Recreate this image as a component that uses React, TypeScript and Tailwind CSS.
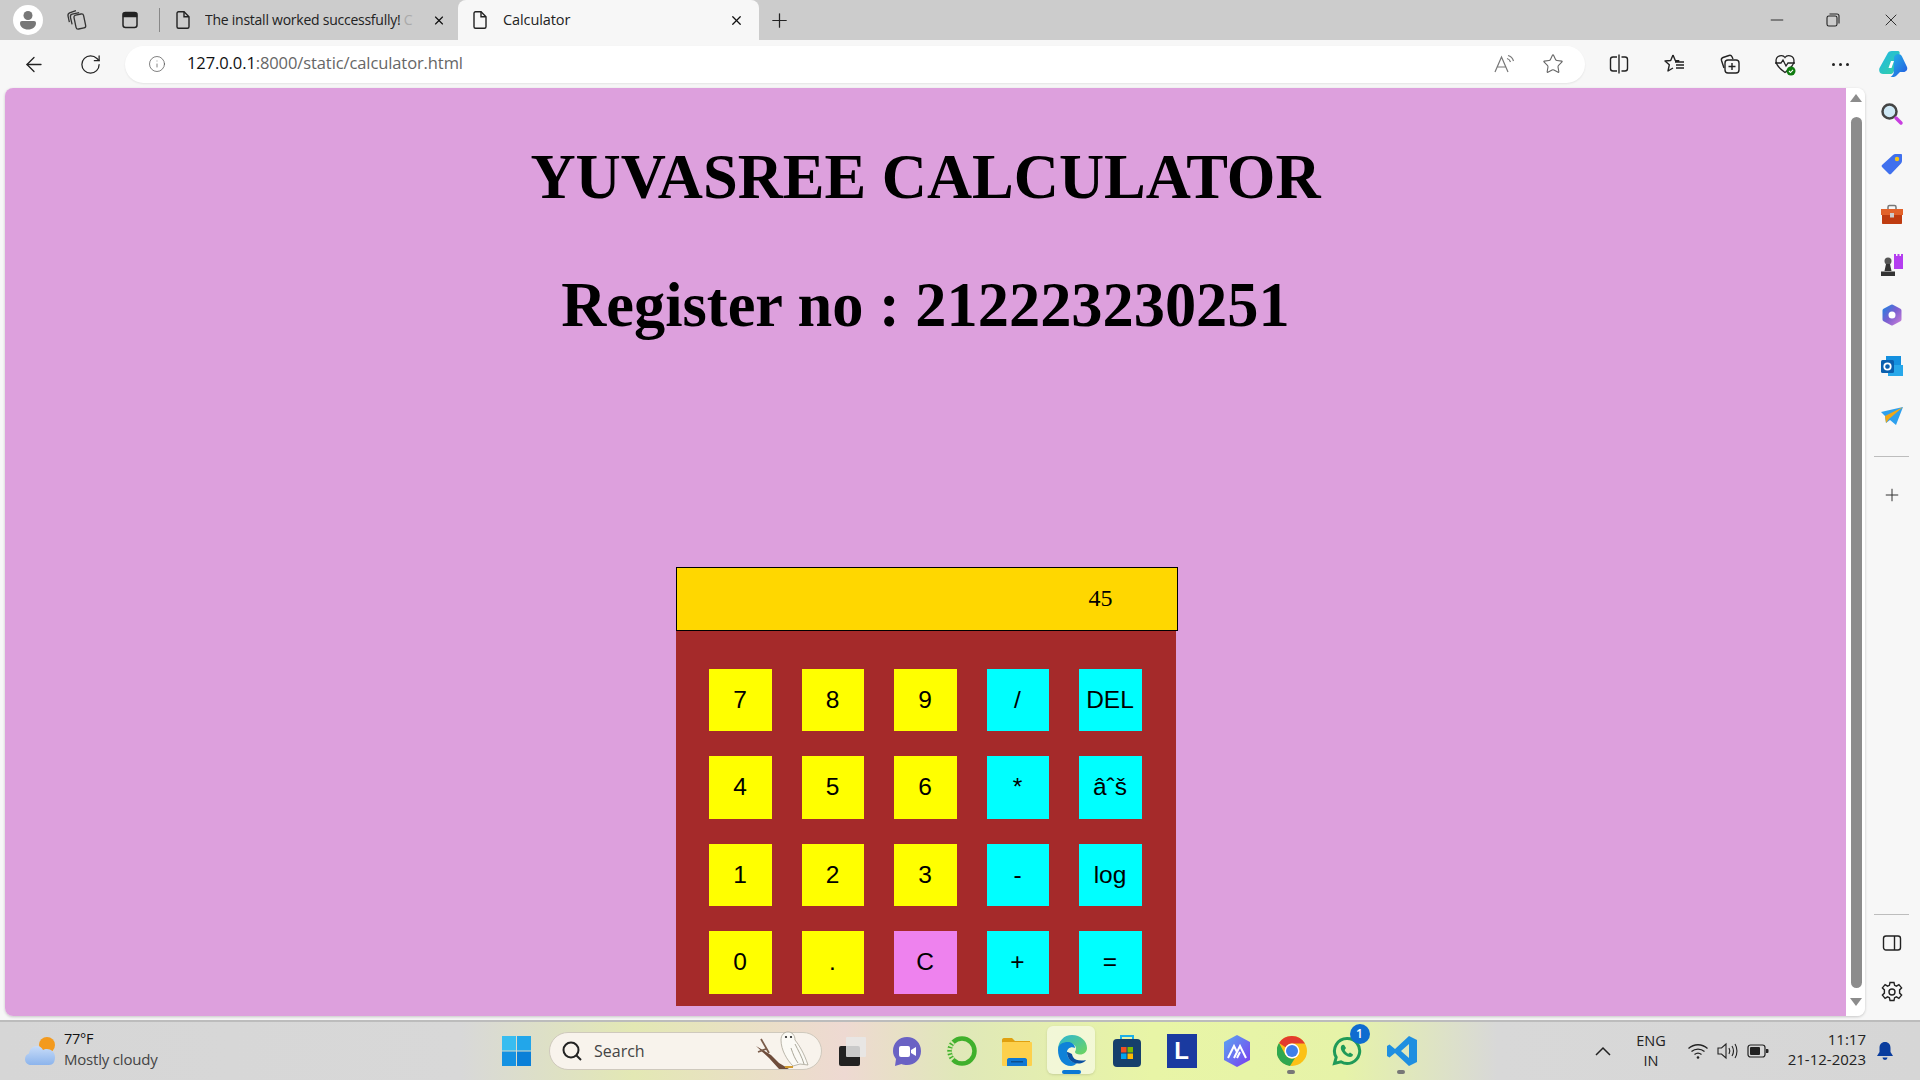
import { ArrowLeft, Info, Minus, Plus, RotateCw, Star, X } from "lucide-react";
import type { ReactNode } from "react";

const ui = "font-['Open_Sans',sans-serif]";

const keys = [
  ["7", "8", "9", "/", "DEL"],
  ["4", "5", "6", "*", "âˆš"],
  ["1", "2", "3", "-", "log"],
  ["0", ".", "C", "+", "="],
];

function keyColor(label: string, col: number) {
  if (label === "C") return "bg-[#ee82ee]";
  return col > 2 ? "bg-[#00ffff]" : "bg-[#ffff00]";
}

function Calculator() {
  return (
    <div className="mx-auto mt-[225px] w-[500px] bg-[#a52a2a] font-normal">
      <div className="h-[64px] w-[502px] border border-black bg-[#ffd700] pr-[64px] text-right font-['Liberation_Serif',serif] text-[24px] leading-[60px] text-black">
        45
      </div>
      <div className="grid grid-cols-[63px_62px_63px_62px_63px] grid-rows-[62px_63px_62px_63px] gap-x-[30px] gap-y-[25px] pb-[12px] pl-[33px] pt-[38px]">
        {keys.flat().map((label, i) => (
          <div key={i} className={`flex items-center justify-center font-['Liberation_Sans',sans-serif] text-[24.500px] text-black ${keyColor(label, i % 5)}`}>
            {label}
          </div>
        ))}
      </div>
    </div>
  );
}

function Doc() {
  return (
    <svg width="18" height="20" viewBox="0 0 18 20" fill="none" stroke="#222" strokeWidth="1.4" className="shrink-0">
      <path d="M3 3.2a1.5 1.5 0 0 1 1.5-1.5h5.5l5 5v10a1.5 1.5 0 0 1-1.5 1.5h-9A1.5 1.5 0 0 1 3 16.700z" />
      <path d="M10 1.700v5h5" />
    </svg>
  );
}

function Slot({ w = 24, className = "", children }: { w?: number; className?: string; children: ReactNode }) {
  return (
    <div style={{ width: w }} className={`flex shrink-0 items-center justify-center ${className}`}>
      {children}
    </div>
  );
}

function TabStrip() {
  return (
    <div className={`flex h-[40px] items-center bg-[#cccccc] pl-[13px] pr-[19px] ${ui}`}>
      <div className="flex h-[30px] w-[30px] shrink-0 items-center justify-center rounded-full bg-white">
        <svg width="20" height="22" viewBox="0 0 20 22" fill="#777">
          <circle cx="10" cy="6.500" r="4.500" />
          <path d="M2 14a2 2 0 0 1 2-2h12a2 2 0 0 1 2 2c0 4-3.500 6.500-8 6.500S2 18 2 14z" />
        </svg>
      </div>
      <Slot className="ml-[22px]">
        <svg width="24" height="24" viewBox="0 0 22 22" fill="none" stroke="#333" strokeWidth="1.200">
          <rect x="9" y="6" width="9" height="13" rx="2" transform="rotate(-12 13 12)" />
          <path d="M6.500 15 5 8.500c-.3-1.500.4-2.500 1.600-2.800L13 4.200M4 13 2.800 7.500C2.500 6 3 5 4.200 4.500L10 2.500" />
        </svg>
      </Slot>
      <Slot className="ml-[29px]">
        <svg width="20" height="20" viewBox="0 0 20 20" fill="none" stroke="#222" strokeWidth="1.500">
          <rect x="3" y="2.500" width="14" height="15" rx="2.500" />
          <path d="M3.500 3.500h13v3h-13z" fill="#222" />
        </svg>
      </Slot>
      <div className="ml-[17px] h-[24px] w-px shrink-0 bg-[#888]" />
      <Slot w={18} className="ml-[14px]">
        <Doc />
      </Slot>
      <div className="ml-[13px] w-[225px] shrink-0 overflow-hidden whitespace-nowrap text-[14px] leading-[20px] tracking-[-0.25px] text-[#222]">
        The install worked successfully! <span className="text-[#aaa]">C</span>
      </div>
      <Slot w={14} className="ml-[2px]">
        <X size={15} strokeWidth={2} color="#111" />
      </Slot>
      <div className="ml-[12px] flex h-[40px] w-[301px] shrink-0 items-center rounded-t-lg bg-[#f7f7f7] pl-[13px] pr-[15px]">
        <Slot w={18}>
          <Doc />
        </Slot>
        <div className="ml-[14px] flex-1 text-[14.500px] leading-[20px] tracking-[-0.1px] text-[#222]">Calculator</div>
        <X size={15} strokeWidth={2} color="#111" />
      </div>
      <Slot className="ml-[8px]">
        <Plus size={23} strokeWidth={1.300} color="#222" />
      </Slot>
      <div className="flex-1" />
      <Minus size={20} strokeWidth={1.100} color="#222" />
      <Slot w={20} className="ml-[36px]">
        <svg width="16" height="16" viewBox="0 0 16 16" fill="none" stroke="#222" strokeWidth="1.100">
          <rect x="2" y="4" width="10" height="10" rx="1.800" />
          <path d="M4.500 2h7.500A2 2 0 0 1 14 4v7.500" />
        </svg>
      </Slot>
      <Slot w={20} className="ml-[38px]">
        <X size={20} strokeWidth={1.100} color="#222" />
      </Slot>
    </div>
  );
}

function Toolbar() {
  return (
    <div className={`flex h-[48px] items-center bg-[#f7f7f7] pl-[22px] ${ui}`}>
      <Slot>
        <ArrowLeft size={25} strokeWidth={1.300} color="#222" />
      </Slot>
      <Slot className="ml-[32px]">
        <RotateCw size={23} strokeWidth={1.300} color="#222" />
      </Slot>
      <div className="ml-[23px] flex h-[37px] w-[1460px] shrink-0 items-center rounded-full bg-white pl-[23px] pr-[20px] shadow-[0_1px_2px_rgba(0,0,0,0.08)]">
        <Slot w={18}>
          <Info size={24} strokeWidth={0.900} color="#444" />
        </Slot>
        <div className="ml-[21px] mt-[-2px] flex-1 text-[16.500px] tracking-[-0.1px] text-[#666]">
          <span className="text-[#111]">127.0.0.1</span>:8000/static/calculator.html
        </div>
        <Slot>
          <svg width="24" height="24" viewBox="0 0 24 24" fill="none" stroke="#777" strokeWidth="1.200">
            <path d="M3 20 9.500 5 16 20M5.500 15h8" />
            <path d="M15 6.500c1.800.5 3 1.700 3.500 3.500M16 3.500c2.800.7 4.700 2.700 5.500 5.500" />
          </svg>
        </Slot>
        <Slot className="ml-[25px]">
          <Star size={22} strokeWidth={1.200} color="#666" />
        </Slot>
      </div>
      <Slot className="ml-[22px]">
        <svg width="22" height="22" viewBox="0 0 22 22" fill="none" stroke="#222" strokeWidth="1.400">
          <path d="M9 4H5a2.500 2.500 0 0 0-2.500 2.500v9A2.500 2.500 0 0 0 5 18h4M13.500 4H17a2.500 2.500 0 0 1 2.500 2.500v9A2.500 2.500 0 0 1 17 18h-3.500M11 1.500v19" />
        </svg>
      </Slot>
      <Slot className="ml-[32px]">
        <svg width="24" height="24" viewBox="0 0 24 24" fill="none" stroke="#222" strokeWidth="1.400" strokeLinejoin="round">
          <path d="M10 3 7.700 8.500 2 9l4.300 3.800L5 19l5-3" />
          <path d="M10 3l2.300 5.500 4 .3M13 13h8M13 16h8M12 10h9" />
        </svg>
      </Slot>
      <Slot className="ml-[31px]">
        <svg width="24" height="24" viewBox="0 0 24 24" fill="none" stroke="#222" strokeWidth="1.400">
          <path d="M6 16 3.500 8.500c-.4-1.400.2-2.500 1.500-3l6-2c1.300-.4 2.400 0 3 1.200L15 7" />
          <rect x="7" y="8" width="14" height="13" rx="3" />
          <path d="M14 11v7M10.500 14.500h7" />
        </svg>
      </Slot>
      <Slot className="ml-[31px]">
        <svg width="24" height="24" viewBox="0 0 24 24" fill="none">
          <path d="M12 5.500C10 2.500 3 3 3 9c0 4 4 8 9 11.500 2-1.400 4-3 5.500-4.700C20 13 21 11 21 9c0-6-7-6.500-9-3.500z" stroke="#222" strokeWidth="1.300" />
          <path d="M2 11h6l2-3 3 6 2-3h7" stroke="#222" strokeWidth="1.300" />
          <circle cx="18" cy="19" r="4.500" fill="#107c10" />
          <path d="m16 19 1.500 1.500 2.500-2.700" stroke="#fff" strokeWidth="1.100" />
        </svg>
      </Slot>
      <Slot className="ml-[31px]">
        <div className="flex gap-[4px]">
          <div className="h-[3px] w-[3px] rounded-full bg-[#222]" />
          <div className="h-[3px] w-[3px] rounded-full bg-[#222]" />
          <div className="h-[3px] w-[3px] rounded-full bg-[#222]" />
        </div>
      </Slot>
      <Slot w={30} className="ml-[26px]">
        <svg width="30" height="28" viewBox="0 0 30 28">
          <defs>
            <linearGradient id="cpa" x1="0" y1="0" x2="1" y2="1">
              <stop offset="0" stopColor="#1fb6e8" />
              <stop offset="1" stopColor="#36d3a0" />
            </linearGradient>
            <linearGradient id="cpb" x1="0" y1="0" x2="1" y2="1">
              <stop offset="0" stopColor="#22b8e8" />
              <stop offset="1" stopColor="#2457e0" />
            </linearGradient>
          </defs>
          <path d="M9 4.500C10 2 11.500 1 14 1h6c1.500 0 2 1.500 1.500 3L16 21c-.8 2.500-2.300 3-4 3H5c-3 0-4.500-3-3.500-6z" fill="url(#cpa)" />
          <path d="M16 7c.8-2 2-3 4-3 1.800 0 3 .7 4 2.500L29 17c1 2.500-.8 5-3.500 5H22l-4 4c-1 1-3 1-5.500 1 1.500-1 2.500-2.300 3.200-4z" fill="url(#cpb)" />
          <path d="M13 11h3l-2.500 7h-3z" fill="#fff" />
        </svg>
      </Slot>
    </div>
  );
}

function Scrollbar() {
  return (
    <div className="flex w-[19px] shrink-0 flex-col items-center bg-white pl-[1px]">
      <div className="mt-[6px] h-0 w-0 border-x-[6px] border-b-[8px] border-x-transparent border-b-[#8c8c8c]" />
      <div className="mt-[15px] h-[871px] w-[11px] rounded-full bg-[#8c8c8c]" />
      <div className="mt-[10px] h-0 w-0 border-x-[6px] border-t-[8px] border-x-transparent border-t-[#8c8c8c]" />
    </div>
  );
}

const sideIcons = [
  <svg key="s" width="24" height="24" viewBox="0 0 24 24" fill="none">
    <circle cx="9.500" cy="9.500" r="7" fill="#cfe8f5" stroke="#444" strokeWidth="2.500" />
    <path d="m16 16 5 5" stroke="#c83ee0" strokeWidth="3.500" strokeLinecap="round" />
  </svg>,
  <svg key="t" width="24" height="24" viewBox="0 0 24 24">
    <path d="M2 13 13 3c.8-.7 1.500-1 2.500-1H21c.7 0 1 .5 1 1v6c0 1-.3 1.800-1 2.500L11 22c-.7.5-1.500.5-2 0l-7-7c-.5-.6-.5-1.400 0-2z" fill="#4070ee" />
    <circle cx="17" cy="7" r="2.200" fill="#f5c518" />
  </svg>,
  <svg key="b" width="24" height="22" viewBox="0 0 24 22">
    <path d="M8 5V3c0-1 .6-1.500 1.500-1.500h5C15.400 1.500 16 2 16 3v2" fill="none" stroke="#777" strokeWidth="1.500" />
    <path d="M1 5h22v6H1z" fill="#e2622a" />
    <path d="M2 11h20v8c0 .6-.4 1-1 1H3c-.6 0-1-.4-1-1z" fill="#bf3c10" />
    <rect x="10" y="9" width="4" height="4.500" fill="#ccc" />
  </svg>,
  <svg key="c" width="24" height="24" viewBox="0 0 24 24">
    <path d="M14 1h2v2h1.500V1h2v2H21V1h2v15h-9z" fill="#b43df0" />
    <circle cx="8" cy="8" r="3.500" fill="#555" />
    <path d="M6 11h4l1.500 7h-7zM1 18.500h14V23H1z" fill="#333" />
  </svg>,
  <svg key="m" width="24" height="24" viewBox="0 0 24 24" fill="none">
    <defs>
      <linearGradient id="m365" x1="0" y1="0" x2="1" y2="1">
        <stop offset="0" stopColor="#2a7de0" />
        <stop offset="0.500" stopColor="#7c5fd0" />
        <stop offset="1" stopColor="#c07ad8" />
      </linearGradient>
    </defs>
    <path d="M12 3.500 19.500 7.500v9L12 20.500 4.500 16.500v-9z" fill="url(#m365)" stroke="url(#m365)" strokeWidth="4" strokeLinejoin="round" />
    <circle cx="12" cy="12" r="3.500" fill="#fff" />
  </svg>,
  <svg key="o" width="24" height="24" viewBox="0 0 24 24">
    <rect x="6" y="2" width="15" height="11" fill="#1490df" />
    <path d="M8 11h15v11H8z" fill="#28a8ea" />
    <rect x="1" y="6" width="13" height="13" rx="1.500" fill="#0a5fae" />
    <circle cx="7.500" cy="12.500" r="3.200" fill="none" stroke="#fff" strokeWidth="1.800" />
  </svg>,
  <svg key="p" width="24" height="20" viewBox="0 0 24 20">
    <path d="M1 6 23 1 16 19 10 14 6 17 5 10z" fill="#2ea0ee" />
    <path d="M5 10 23 1 9 13l-3 4z" fill="#f0a818" />
  </svg>,
];

function Sidebar() {
  return (
    <div className="flex w-[53px] shrink-0 flex-col items-center pt-[1px]">
      {sideIcons.map((icon, i) => (
        <div key={i} className="flex h-[50.300px] w-full items-center justify-center">
          {icon}
        </div>
      ))}
      <div className="mt-[15px] h-px w-[35px] bg-[#bdbdbd]" />
      <Plus size={20} strokeWidth={1.200} color="#333" className="mt-[28px]" />
      <div className="flex-1" />
      <div className="h-px w-[35px] bg-[#bdbdbd]" />
      <svg width="20" height="18" viewBox="0 0 20 18" fill="none" stroke="#222" strokeWidth="1.400" className="mt-[19px]">
        <rect x="1.500" y="2" width="17" height="14" rx="2.500" />
        <path d="M12.500 2v14" />
      </svg>
      <svg width="24" height="24" viewBox="0 0 24 24" fill="none" stroke="#222" strokeWidth="1.400" className="mb-[12px] mt-[28px]">
        <circle cx="12" cy="12" r="3" />
        <path d="M10 2.500h4l.6 2.800 1.800.8 2.500-1.500 2.700 3.300-2 2v3.200l2 2-2.700 3.300-2.500-1.500-1.800.8-.6 2.800h-4l-.6-2.800-1.800-.8-2.500 1.500-2.700-3.300 2-2v-3.200l-2-2 2.700-3.300 2.500 1.500 1.800-.8z" />
      </svg>
    </div>
  );
}

const taskIcons: { icon: ReactNode; active?: boolean; dot?: boolean }[] = [
  {
    icon: (
      <svg width="30" height="32" viewBox="0 0 30 32">
        <rect x="2" y="11" width="21" height="20" rx="2" fill="#222" />
        <rect x="9" y="2" width="20" height="20" rx="1" fill="#e8e8e8" fillOpacity="0.850" />
      </svg>
    ),
  },
  {
    icon: (
      <svg width="30" height="32" viewBox="0 0 30 32">
        <path d="M15 2c8 0 14 6 14 14s-6 14-14 14c-2 0-4-.4-5.500-1L3 31l1-7C2 21.500 1 19 1 16 1 8 7 2 15 2z" fill="#6a62c4" />
        <rect x="7" y="11" width="11" height="11" rx="2" fill="#fff" />
        <path d="m19 15 5-3v9l-5-3z" fill="#fff" />
      </svg>
    ),
  },
  {
    icon: (
      <svg width="32" height="32" viewBox="0 0 32 32" fill="none">
        <circle cx="16" cy="16" r="12.500" stroke="#40b02c" strokeWidth="4.500" />
        <path d="M7 7a12.500 12.500 0 0 0 0 18" stroke="#d8e8b0" strokeWidth="5" strokeDasharray="2 1.500" />
      </svg>
    ),
  },
  {
    icon: (
      <svg width="31" height="30" viewBox="0 0 31 30">
        <path d="M1 4c0-1 .6-2 2-2h8l3 3h15v6H1z" fill="#e0a010" />
        <rect x="1" y="6" width="30" height="24" rx="1" fill="#fdd04c" />
        <path d="M6 30v-6c0-1 .8-2 2-2h16c1.200 0 2 1 2 2v6z" fill="#0f78d4" />
        <rect x="10" y="25" width="12" height="1.500" fill="#0a4f90" />
      </svg>
    ),
  },
  {
    icon: (
      <svg width="30" height="34" viewBox="0 0 30 34">
        <defs>
          <linearGradient id="ega" x1="0" y1="0" x2="1" y2="1">
            <stop offset="0" stopColor="#2bb5d8" />
            <stop offset="1" stopColor="#6fd65a" />
          </linearGradient>
        </defs>
        <path d="M1 16C1 7 7 1 15 1c8.500 0 15 6 15 13 0 4-3 6.500-7 6.500-3 0-5-1-5-2.500 0-1 1-1.500 1-3.500 0-3-2.800-5-6-5-6 0-12 3-12 6.500z" fill="url(#ega)" />
        <path d="M1 16C1 10 6 8 11 8c3.500 0 7 2.500 7 6-4-2-8 .5-8 4.500 0 5 4 10 10 11-2 1-3.500 2.500-6 2.500C6 32 1 25 1 16z" fill="#0f82d8" />
        <path d="M10 18.500c0 6 5.500 12 13 11 2.500-.4 5-1.800 6-3.500-4 1-11 1-13-3-1-2-.5-3-2-3.500-2-.8-4-2-4-1z" fill="#0a4fa0" />
      </svg>
    ),
    active: true,
  },
  {
    icon: (
      <svg width="30" height="34" viewBox="0 0 30 34">
        <path d="M9 6V2h12v4" fill="none" stroke="#1eb0e8" strokeWidth="2" />
        <rect x="1" y="5" width="28" height="28" rx="4" fill="#16406c" />
        <rect x="9" y="13" width="5.500" height="5.500" fill="#f25022" />
        <rect x="15.500" y="13" width="5.500" height="5.500" fill="#7fba00" />
        <rect x="9" y="19.500" width="5.500" height="5.500" fill="#00a4ef" />
        <rect x="15.500" y="19.500" width="5.500" height="5.500" fill="#ffb900" />
      </svg>
    ),
  },
  {
    icon: (
      <div className="flex h-[34px] w-[30px] items-center justify-center bg-[#1a3aa0] font-['Liberation_Sans',sans-serif] text-[24px] font-bold leading-none text-white">
        L
      </div>
    ),
  },
  {
    icon: (
      <svg width="28" height="34" viewBox="0 0 28 34" fill="none">
        <defs>
          <linearGradient id="hex" x1="0" y1="0" x2="1" y2="1">
            <stop offset="0" stopColor="#5aa8f0" />
            <stop offset="1" stopColor="#7a3cf0" />
          </linearGradient>
        </defs>
        <path d="M14 1 27 8v18l-13 7-13-7V8z" fill="url(#hex)" strokeLinejoin="round" />
        <path d="m5 24 6-12 3 6M11 24l3-6 3-6 6 12M14 24l3-6" stroke="#fff" strokeWidth="2" />
      </svg>
    ),
    dot: false,
  },
  {
    icon: (
      <svg width="30" height="32" viewBox="0 0 30 32">
        <circle cx="15" cy="16" r="15" fill="#fbc116" />
        <path d="M15 1a15 15 0 0 1 13 7.500H15A7.500 7.500 0 0 0 8.500 12.300L2 8A15 15 0 0 1 15 1z" fill="#e33b2e" />
        <path d="M2 8l6.500 12A7.500 7.500 0 0 0 18 23l-5 8A15 15 0 0 1 2 8z" fill="#2fa84f" />
        <circle cx="15" cy="16" r="7.500" fill="#fff" />
        <circle cx="15" cy="16" r="6" fill="#3f7fe8" />
      </svg>
    ),
    dot: true,
  },
  {
    icon: (
      <div className="relative">
        <svg width="32" height="32" viewBox="0 0 32 32" fill="none">
          <path d="M16 3.500a12.500 12.500 0 0 0-10.800 18.800L3.500 28.500l6.400-1.700A12.500 12.500 0 1 0 16 3.500z" stroke="#1f9a58" strokeWidth="3" />
          <path d="M11 10c-1 1-2 3 0 6.500 2 3.200 5 5.300 8 5.500 2 0 3-1.500 3-2.500l-3-2-1.500 1.200c-1.500-.5-3.200-2.200-3.800-3.800L15 13l-2-3.300z" fill="#1f9a58" />
        </svg>
        <div className="absolute right-[-7px] top-[-11px] flex h-[20px] w-[20px] items-center justify-center rounded-full bg-[#0f6cd0] text-[12px] font-semibold text-white">
          1
        </div>
      </div>
    ),
  },
  {
    icon: (
      <svg width="32" height="32" viewBox="0 0 32 32">
        <path d="M23 1 31 5v22l-8 4L9 18l-5.500 4.500L1 21v-10l2.500-1.500L9 14zM23 9l-8 7 8 7z" fill="#1f8fe0" fillRule="evenodd" />
      </svg>
    ),
    dot: true,
  },
];

function Taskbar() {
  return (
    <div className={`flex h-[60px] items-center border-t-2 border-[#bcbcbc] bg-[linear-gradient(90deg,#d6d6d6_0%,#d8d8d8_24%,#e3e8b4_33%,#eed9d2_44%,#e0e8b8_50%,#e8f5a6_60%,#e6f3a8_70%,#d8d8d8_78%,#d6d6d6_100%)] pl-[25px] pr-[25px] ${ui}`}>
      <svg width="30" height="32" viewBox="0 0 30 32" className="shrink-0">
        <defs>
          <linearGradient id="cloud" x1="0" y1="0" x2="0" y2="1">
            <stop offset="0" stopColor="#c8dcf8" />
            <stop offset="1" stopColor="#8cb4ec" />
          </linearGradient>
        </defs>
        <circle cx="22" cy="10" r="8" fill="#f39a1e" />
        <path d="M6 30c-3.500 0-6-2.500-6-6 0-3 2-5 4-5.500C4.500 14 8 11 12 11c3 0 5 2 6 4 1-.5 2-1 4-1 4 0 8 3 8 8s-2 8-6 8z" fill="url(#cloud)" />
      </svg>
      <div className="ml-[9px] mt-[-4px] w-[438px] shrink-0">
        <div className="text-[14.500px] leading-[20px] tracking-[-0.3px] text-[#111]">77°F</div>
        <div className="text-[15px] leading-[20px] tracking-[-0.2px] text-[#444]">Mostly cloudy</div>
      </div>
      <svg width="29" height="30" viewBox="0 0 29 30" className="shrink-0">
        <rect width="14" height="14.500" fill="#38bdf0" />
        <rect x="15" width="14" height="14.500" fill="#22a6ea" />
        <rect y="15.500" width="14" height="14.500" fill="#1592e2" />
        <rect x="15" y="15.500" width="14" height="14.500" fill="#0a80d8" />
      </svg>
      <div className="relative ml-[18px] flex h-[38px] w-[273px] shrink-0 items-center rounded-full border border-[#cfc9bd] bg-[#f8f3ec] pl-[11px]">
        <svg width="22" height="22" viewBox="0 0 22 22" fill="none" stroke="#222" strokeWidth="2">
          <circle cx="10" cy="10" r="7.500" />
          <path d="m15.500 15.500 4.500 4.500" />
        </svg>
        <span className="ml-[11px] text-[16px] text-[#444]">Search</span>
        <svg width="62" height="40" viewBox="0 0 62 40" className="absolute right-[4px] top-[-3px]">
          <path d="M1 16 16 25l8 8 10 6H24L14 28z" fill="#6e4c3a" />
          <path d="M6 9l8 14M3 22l8-3" stroke="#7a5c4a" strokeWidth="1.800" />
          <path d="M26 10c0-5 3-8 7-8s7 3 7 8c4 5 9 13 13 25l-8-1-7 2c-6-6-12-16-12-26z" fill="#fbfaf5" stroke="#a8a597" strokeWidth="0.800" />
          <path d="M40 14c3 6 7 13 9 20M36 18c2 6 4 11 7 15" stroke="#aaa799" fill="none" />
          <circle cx="31" cy="7" r="1.100" fill="#222" />
          <circle cx="36" cy="7" r="1.100" fill="#222" />
          <path d="M30 36h8v2h-8z" fill="#d09a30" />
        </svg>
      </div>
      <div className="ml-[2px] flex shrink-0">
        {taskIcons.map((t, i) => (
          <div key={i} className="relative flex h-[60px] w-[55px] items-center justify-center">
            {t.active && <div className="absolute left-[3px] top-[5px] h-[48px] w-[48px] rounded-md bg-white/50 shadow-sm" />}
            <div className="relative">{t.icon}</div>
            {t.active && <div className="absolute left-[18px] top-[49px] h-[4px] w-[19px] rounded-full bg-[#0a78d4]" />}
            {t.dot && <div className="absolute left-[23px] top-[49px] h-[4px] w-[8px] rounded-full bg-[#777]" />}
          </div>
        ))}
      </div>
      <div className="flex-1" />
      <svg width="20" height="12" viewBox="0 0 20 12" fill="none" stroke="#222" strokeWidth="1.500" className="shrink-0">
        <path d="m3 10 7-7 7 7" />
      </svg>
      <div className="ml-[18px] mt-[-1px] w-[40px] shrink-0 text-center text-[14.500px] leading-[20px] text-[#222]">
        ENG
        <br />
        IN
      </div>
      <Slot w={22} className="ml-[16px]">
        <svg width="22" height="18" viewBox="0 0 22 18" fill="none" stroke="#222" strokeWidth="1.300">
          <path d="M1.500 6.500c5.500-5 13.500-5 19 0M4.500 9.500c3.800-3.300 9.200-3.300 13 0M7.500 12.500c2-1.600 5-1.600 7 0" />
          <circle cx="11" cy="15.500" r="1.300" fill="#222" stroke="none" />
        </svg>
      </Slot>
      <Slot w={22} className="ml-[8px]">
        <svg width="22" height="18" viewBox="0 0 22 18" fill="none" stroke="#222" strokeWidth="1.100">
          <path d="M1 6h3.500L9 2v14l-4.500-4H1z" />
          <path d="M12 6c1 1.800 1 4.200 0 6M15 4c1.800 3 1.800 7 0 10M18 2c2.600 4 2.600 10 0 14" />
        </svg>
      </Slot>
      <Slot w={22} className="ml-[8px]">
        <svg width="22" height="14" viewBox="0 0 22 14" fill="none">
          <rect x="1" y="1" width="17" height="12" rx="2.500" stroke="#222" strokeWidth="1.200" />
          <rect x="3" y="3" width="10" height="8" rx="1" fill="#222" />
          <path d="M19 5h1.500a1 1 0 0 1 1 1v2a1 1 0 0 1-1 1H19z" fill="#222" />
        </svg>
      </Slot>
      <div className="ml-[7px] mt-[-4px] w-[90px] shrink-0 text-right text-[15px] leading-[20px] text-[#222]">
        11:17
        <br />
        21-12-2023
      </div>
      <Slot w={20} className="ml-[9px]">
        <svg width="18" height="20" viewBox="0 0 18 20" fill="#0a3d9e">
          <path d="M9 1c-3.500 0-5.500 2.500-5.500 6v4L1 15h16l-2.500-4V7C14.500 3.500 12.500 1 9 1z" />
          <path d="M6.500 16.500h5a2.500 2.500 0 0 1-5 0z" />
        </svg>
      </Slot>
    </div>
  );
}

export default function App() {
  return (
    <div className="flex h-[1080px] w-[1920px] flex-col overflow-hidden bg-[#f7f7f7]">
      <TabStrip />
      <Toolbar />
      <div className="flex h-[932px] pb-[4px] pl-[5px]">
        <div className="flex w-[1860px] shrink-0 overflow-hidden rounded-lg shadow-[0_1px_3px_rgba(0,0,0,0.2)]">
          <div className="w-[1841px] shrink-0 bg-[#dda0dd] text-center font-['Liberation_Serif',serif] font-bold text-black">
            <h1 className="pt-[52px] text-[62.500px] leading-[74px]">YUVASREE CALCULATOR</h1>
            <h1 className="mt-[54px] text-[62.400px] leading-[74px]">Register no : 212223230251</h1>
            <Calculator />
          </div>
          <Scrollbar />
        </div>
        <Sidebar />
      </div>
      <Taskbar />
    </div>
  );
}
